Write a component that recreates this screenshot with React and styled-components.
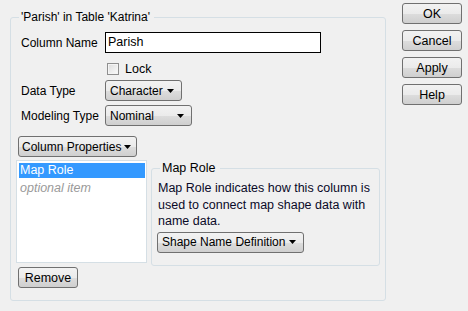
import styled, { createGlobalStyle } from "styled-components";

const GlobalStyle = createGlobalStyle`
  html, body {
    margin: 0;
    padding: 0;
    background: #f0f0f0;
  }
  body {
    width: 468px;
    height: 311px;
    overflow: hidden;
    font-family: "Liberation Sans", Arial, sans-serif;
    font-size: 12px;
    color: #000000;
  }
`;

function Arrow() {
  return (
    <svg width="7" height="4" viewBox="0 0 7 4">
      <path d="M0 0 H7 L3.5 4 Z" fill="#000" />
    </svg>
  );
}

function Dropdown({ label, width }) {
  return (
    <Select $width={width}>
      <span>{label}</span>
      <Arrow />
    </Select>
  );
}

export default function App() {
  return (
    <>
      <GlobalStyle />
      <Dialog>
        <Group>
          <Legend>'Parish' in Table 'Katrina'</Legend>
          <Form>
            <Row $top={8}>
              <Label>Column Name</Label>
              <TextInput>Parish</TextInput>
            </Row>
            <Row $top={9}>
              <Label />
              <CheckRow>
                <Checkbox />
                <span>Lock</span>
              </CheckRow>
            </Row>
            <Row $top={5}>
              <Label>Data Type</Label>
              <Dropdown label="Character" width={77} />
            </Row>
            <Row $top={4}>
              <Label>Modeling Type</Label>
              <Dropdown label="Nominal" width={87} />
            </Row>
            <PropsButton>
              <span>Column Properties</span>
              <Arrow />
            </PropsButton>
            <Split>
              <ListBox>
                <ListItem $selected>Map Role</ListItem>
                <ListItem $hint>optional item</ListItem>
              </ListBox>
              <SubGroup>
                <SubLegend>Map Role</SubLegend>
                <Description>
                  Map Role indicates how this column is used to connect map
                  shape data with name data.
                </Description>
                <Dropdown label="Shape Name Definition" width={147} />
              </SubGroup>
            </Split>
            <PushButton $width={60} $left={2}>
              Remove
            </PushButton>
          </Form>
        </Group>
        <Actions>
          <PushButton $width={60}>OK</PushButton>
          <PushButton $width={60}>Cancel</PushButton>
          <PushButton $width={60}>Apply</PushButton>
          <PushButton $width={60}>Help</PushButton>
        </Actions>
      </Dialog>
    </>
  );
}

const Dialog = styled.div`
  display: flex;
  align-items: flex-start;
  padding: 3px 0 0 10px;
`;

const Group = styled.fieldset`
  box-sizing: border-box;
  width: 376px;
  height: 291px;
  margin: 7px 0 0 0;
  padding: 0 5px;
  border: 1px solid #d5dfe5;
  border-radius: 3px;
  min-width: 0;
`;

const Legend = styled.legend`
  padding: 0 4px 0 2px;
  margin-left: 3px;
  line-height: 14px;
  font-size: 12px;
`;

const Form = styled.div`
  display: flex;
  flex-direction: column;
  align-items: flex-start;
`;

const Row = styled.div`
  display: flex;
  align-items: center;
  margin-top: ${(p) => p.$top}px;
`;

const Label = styled.div`
  width: 89px;
  padding-left: 5px;
  box-sizing: border-box;
  white-space: nowrap;
  font-size: 12px;
`;

const TextInput = styled.div`
  box-sizing: border-box;
  width: 216px;
  height: 21px;
  border: 1px solid #000000;
  background: #ffffff;
  padding: 2px 0 0 2px;
  font-size: 12.5px;
  line-height: 15px;
`;

const CheckRow = styled.div`
  display: flex;
  align-items: center;
  gap: 6px;
  padding-left: 2px;
  height: 13px;
  font-size: 12.5px;
`;

const Checkbox = styled.div`
  box-sizing: border-box;
  width: 12px;
  height: 12px;
  border: 1px solid #8f8f8f;
  background: linear-gradient(135deg, #dcdcdc, #fbfbfb);
  box-shadow: inset 0 0 0 1px #f4f4f4;
`;

const Select = styled.div`
  box-sizing: border-box;
  width: ${(p) => p.$width}px;
  height: 21px;
  display: flex;
  align-items: center;
  justify-content: space-between;
  padding: 0 7px 0 4px;
  border: 1px solid #707070;
  border-radius: 3px;
  background: linear-gradient(#f2f2f2 0%, #ebebeb 50%, #dddddd 51%, #cfcfcf 100%);
  font-size: 12px;
  white-space: nowrap;
`;

const PropsButton = styled(Select)`
  width: 119px;
  padding: 0 5px 0 3px;
  margin: 10px 0 0 2px;
`;

const Split = styled.div`
  display: flex;
  align-items: flex-start;
  margin-top: 3px;
`;

const ListBox = styled.div`
  box-sizing: border-box;
  width: 131px;
  height: 103px;
  border: 1px solid #d5dfe5;
  background: #ffffff;
  padding: 2px 1px 0 2px;
`;

const ListItem = styled.div`
  height: 15px;
  line-height: 15px;
  padding-left: 1px;
  font-size: 12.5px;
  margin-bottom: 3px;
  background: ${(p) => (p.$selected ? "#3399ff" : "transparent")};
  color: ${(p) => (p.$selected ? "#ffffff" : p.$hint ? "#9a9a9a" : "#000")};
  font-style: ${(p) => (p.$hint ? "italic" : "normal")};
`;

const SubGroup = styled.fieldset`
  box-sizing: border-box;
  width: 229px;
  height: 105px;
  margin: 1px 0 0 4px;
  padding: 0 4px 0 5px;
  border: 1px solid #d5dfe5;
  border-radius: 3px;
  min-width: 0;
`;

const SubLegend = styled.legend`
  padding: 0 4px 0 2px;
  margin-left: 3px;
  line-height: 14px;
  font-size: 12.5px;
`;

const Description = styled.p`
  margin: 5px 0 2px 1px;
  font-size: 12.5px;
  line-height: 16.5px;
  color: #0a0a28;
`;

const Actions = styled.div`
  display: flex;
  flex-direction: column;
  gap: 6px;
  margin-left: 16px;
`;

const PushButton = styled.div`
  box-sizing: border-box;
  width: ${(p) => p.$width}px;
  height: 21px;
  margin-left: ${(p) => p.$left || 0}px;
  margin-top: ${(p) => (p.$left ? 1 : 0)}px;
  display: flex;
  align-items: center;
  justify-content: center;
  border: 1px solid #707070;
  border-radius: 3px;
  background: linear-gradient(#f2f2f2 0%, #ebebeb 50%, #dddddd 51%, #cfcfcf 100%);
  font-size: 12.5px;
`;
